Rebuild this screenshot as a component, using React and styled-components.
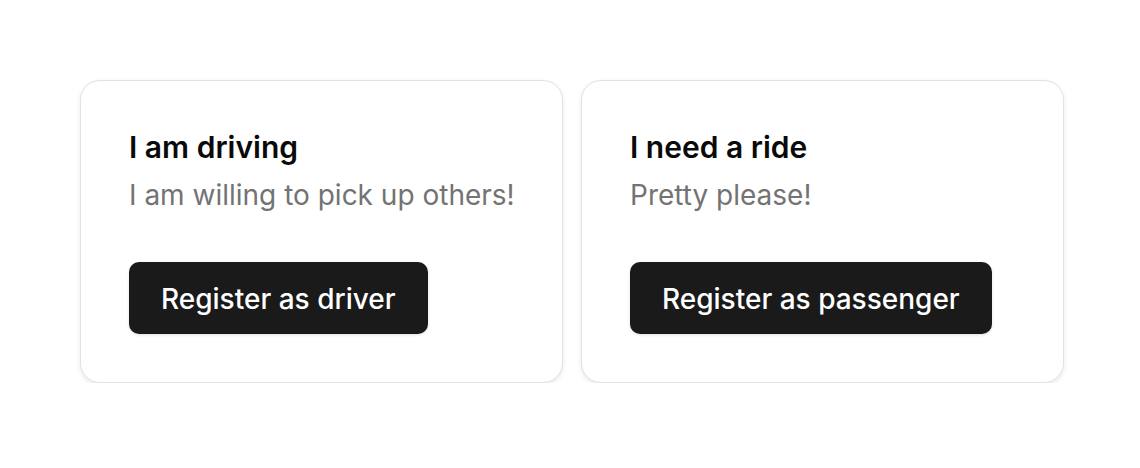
import React from 'react';
import styled, { createGlobalStyle } from 'styled-components';

const GlobalStyle = createGlobalStyle`
  html, body {
    margin: 0;
    background: #ffffff;
    font-family: Inter, "Noto Sans", sans-serif;
  }
`;

const Page = styled.div`
  display: grid;
  grid-template-columns: 483px 483px;
  gap: 18px;
  padding: 80px 0 0 80px;
`;

const Card = styled.div`
  display: flex;
  flex-direction: column;
  align-items: flex-start;
  padding: 47px 48px 48px;
  background: #fff;
  border: 1px solid #e2e2e2;
  border-radius: 20px;
  box-shadow: 0 2px 5px rgba(0, 0, 0, 0.09);
`;

const Title = styled.h2`
  margin: 0;
  font-size: 30px;
  font-weight: 600;
  line-height: 38px;
  color: #0a0a0a;
`;

const Subtitle = styled.p`
  margin: 11px 0 0;
  font-size: 28px;
  line-height: 36px;
  color: #737373;
  white-space: nowrap;
`;

const Button = styled.button`
  margin-top: 49px;
  height: 72px;
  padding: 1px 32px 0;
  border: none;
  border-radius: 10px;
  background: #1a1a1a;
  color: #fff;
  font-family: inherit;
  font-size: 28px;
  font-weight: 500;
  cursor: pointer;
  box-shadow: 0 1px 3px rgba(0, 0, 0, 0.12);
`;

const options = [
  { title: 'I am driving', text: 'I am willing to pick up others!', action: 'Register as driver' },
  { title: 'I need a ride', text: 'Pretty please!', action: 'Register as passenger' },
];

export default function App() {
  return (
    <>
      <GlobalStyle />
      <Page>
        {options.map(o => (
          <Card key={o.title}>
            <Title>{o.title}</Title>
            <Subtitle>{o.text}</Subtitle>
            <Button>{o.action}</Button>
          </Card>
        ))}
      </Page>
    </>
  );
}
